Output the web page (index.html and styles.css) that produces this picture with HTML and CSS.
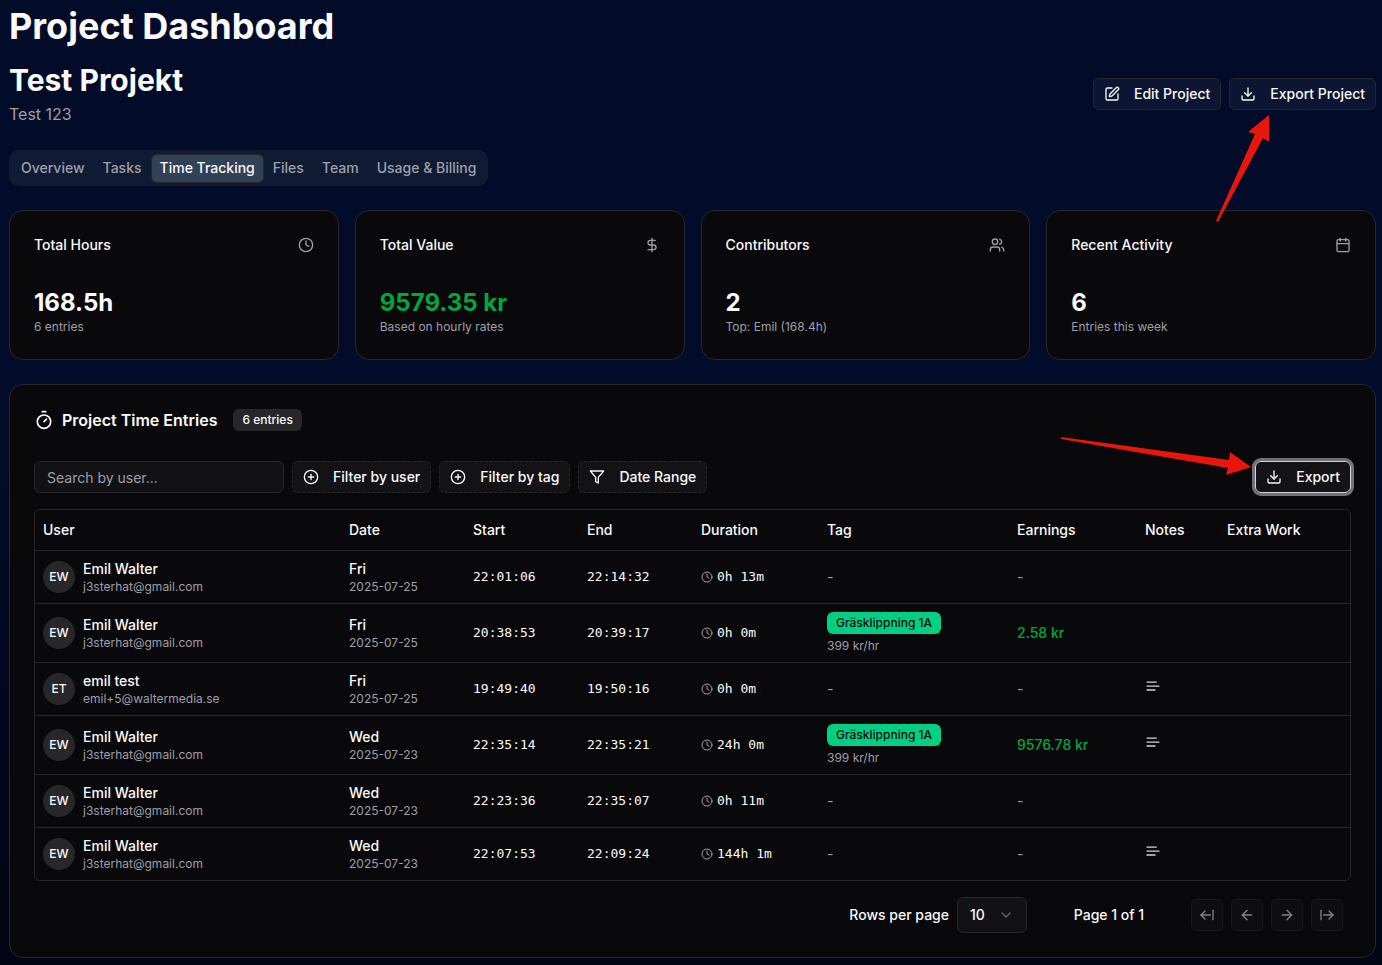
FILE: index.html
```
<!DOCTYPE html>
<html lang="en">
<head>
<meta charset="UTF-8">
<meta name="viewport" content="width=device-width, initial-scale=1">
<title>Project Dashboard</title>
<link rel="stylesheet" href="styles.css">
</head>
<body>
  <!-- shared icons -->
  <svg class="sprite" aria-hidden="true">
    <symbol id="i-edit" viewBox="0 0 24 24"><path d="M12 3H5a2 2 0 0 0-2 2v14a2 2 0 0 0 2 2h14a2 2 0 0 0 2-2v-7"/><path d="M18.375 2.625a1 1 0 0 1 3 3l-9.013 9.014a2 2 0 0 1-.853.505l-2.873.84a.5.5 0 0 1-.62-.62l.84-2.873a2 2 0 0 1 .506-.852z"/></symbol>
    <symbol id="i-download" viewBox="0 0 24 24"><path d="M21 15v4a2 2 0 0 1-2 2H5a2 2 0 0 1-2-2v-4"/><path d="M7 10l5 5 5-5"/><path d="M12 15V3"/></symbol>
    <symbol id="i-clock" viewBox="0 0 24 24"><circle cx="12" cy="12" r="10"/><path d="M12 6v6l4 2"/></symbol>
    <symbol id="i-dollar" viewBox="0 0 24 24"><path d="M12 2v20"/><path d="M17 5H9.500a3.500 3.500 0 0 0 0 7h5a3.500 3.500 0 0 1 0 7H6"/></symbol>
    <symbol id="i-users" viewBox="0 0 24 24"><path d="M16 21v-2a4 4 0 0 0-4-4H6a4 4 0 0 0-4 4v2"/><circle cx="9" cy="7" r="4"/><path d="M22 21v-2a4 4 0 0 0-3-3.870"/><path d="M16 3.130a4 4 0 0 1 0 7.750"/></symbol>
    <symbol id="i-calendar" viewBox="0 0 24 24"><path d="M8 2v4"/><path d="M16 2v4"/><rect width="18" height="18" x="3" y="4" rx="2"/><path d="M3 10h18"/></symbol>
    <symbol id="i-timer" viewBox="0 0 24 24"><path d="M10 2h4"/><path d="M12 14l3-3"/><circle cx="12" cy="14" r="8"/></symbol>
    <symbol id="i-plus" viewBox="0 0 24 24"><circle cx="12" cy="12" r="10"/><path d="M8 12h8"/><path d="M12 8v8"/></symbol>
    <symbol id="i-filter" viewBox="0 0 24 24"><path d="M22 3H2l8 9.460V19l4 2v-8.540z"/></symbol>
    <symbol id="i-text" viewBox="0 0 24 24"><path d="M17 6.100H3"/><path d="M21 12.100H3"/><path d="M15.100 18H3"/></symbol>
    <symbol id="i-left" viewBox="0 0 24 24"><path d="M12 19l-7-7 7-7"/><path d="M19 12H5"/></symbol>
    <symbol id="i-right" viewBox="0 0 24 24"><path d="M5 12h14"/><path d="M12 5l7 7-7 7"/></symbol>
    <symbol id="i-first" viewBox="0 0 24 24"><path d="M9 6l-6 6 6 6"/><path d="M3 12h14"/><path d="M21 19V5"/></symbol>
    <symbol id="i-last" viewBox="0 0 24 24"><path d="M3 5v14"/><path d="M21 12H7"/><path d="M15 18l6-6-6-6"/></symbol>
  </svg>

  <main class="page">
    <h1>Project Dashboard</h1>

    <header class="project">
      <div>
        <h2>Test Projekt</h2>
        <p class="description">Test 123</p>
      </div>
      <div class="actions">
        <button class="button" type="button"><svg class="icon"><use href="#i-edit"/></svg>Edit Project</button>
        <button class="button" type="button"><svg class="icon"><use href="#i-download"/></svg>Export Project</button>
      </div>
    </header>

    <div class="tabs" role="tablist">
      <button class="tab" type="button" role="tab">Overview</button>
      <button class="tab" type="button" role="tab">Tasks</button>
      <button class="tab active" type="button" role="tab" aria-selected="true">Time Tracking</button>
      <button class="tab" type="button" role="tab">Files</button>
      <button class="tab" type="button" role="tab">Team</button>
      <button class="tab" type="button" role="tab">Usage &amp; Billing</button>
    </div>

    <section class="stats">
      <div class="card">
        <div class="card-top"><h3>Total Hours</h3><svg class="icon"><use href="#i-clock"/></svg></div>
        <div class="value">168.5h</div>
        <p class="small">6 entries</p>
      </div>
      <div class="card">
        <div class="card-top"><h3>Total Value</h3><svg class="icon"><use href="#i-dollar"/></svg></div>
        <div class="value green">9579.35 kr</div>
        <p class="small">Based on hourly rates</p>
      </div>
      <div class="card">
        <div class="card-top"><h3>Contributors</h3><svg class="icon"><use href="#i-users"/></svg></div>
        <div class="value">2</div>
        <p class="small">Top: Emil (168.4h)</p>
      </div>
      <div class="card">
        <div class="card-top"><h3>Recent Activity</h3><svg class="icon"><use href="#i-calendar"/></svg></div>
        <div class="value">6</div>
        <p class="small">Entries this week</p>
      </div>
    </section>

    <section class="card entries">
      <div class="entries-title">
        <svg class="icon large"><use href="#i-timer"/></svg>
        <h3>Project Time Entries</h3>
        <span class="badge">6 entries</span>
      </div>

      <div class="toolbar">
        <input class="search" type="text" placeholder="Search by user..." aria-label="Search by user">
        <button class="button dashed" type="button"><svg class="icon"><use href="#i-plus"/></svg>Filter by user</button>
        <button class="button dashed" type="button"><svg class="icon"><use href="#i-plus"/></svg>Filter by tag</button>
        <button class="button dashed" type="button"><svg class="icon"><use href="#i-filter"/></svg>Date Range</button>
        <button class="button focused" type="button"><svg class="icon"><use href="#i-download"/></svg>Export</button>
      </div>

      <div class="table-wrap">
        <table>
          <colgroup>
            <col class="c-user"><col class="c-date"><col class="c-time"><col class="c-time"><col class="c-duration"><col class="c-tag"><col class="c-earnings"><col class="c-notes"><col class="c-extra">
          </colgroup>
          <thead>
            <tr><th>User</th><th>Date</th><th>Start</th><th>End</th><th>Duration</th><th>Tag</th><th>Earnings</th><th>Notes</th><th>Extra Work</th></tr>
          </thead>
          <tbody>
            <tr>
              <td><div class="user"><span class="avatar">EW</span><div><div class="name">Emil Walter</div><div class="small">j3sterhat@gmail.com</div></div></div></td>
              <td><div class="name">Fri</div><div class="small">2025-07-25</div></td>
              <td class="mono">22:01:06</td>
              <td class="mono">22:14:32</td>
              <td class="mono"><div class="duration"><svg class="icon tiny"><use href="#i-clock"/></svg>0h 13m</div></td>
              <td class="muted">-</td>
              <td class="muted">-</td>
              <td></td>
              <td></td>
            </tr>
            <tr>
              <td><div class="user"><span class="avatar">EW</span><div><div class="name">Emil Walter</div><div class="small">j3sterhat@gmail.com</div></div></div></td>
              <td><div class="name">Fri</div><div class="small">2025-07-25</div></td>
              <td class="mono">20:38:53</td>
              <td class="mono">20:39:17</td>
              <td class="mono"><div class="duration"><svg class="icon tiny"><use href="#i-clock"/></svg>0h 0m</div></td>
              <td><div class="tag-cell"><span class="badge tag">Gräsklippning 1A</span><span class="small">399 kr/hr</span></div></td>
              <td class="name green">2.58 kr</td>
              <td></td>
              <td></td>
            </tr>
            <tr>
              <td><div class="user"><span class="avatar">ET</span><div><div class="name">emil test</div><div class="small">emil+5@waltermedia.se</div></div></div></td>
              <td><div class="name">Fri</div><div class="small">2025-07-25</div></td>
              <td class="mono">19:49:40</td>
              <td class="mono">19:50:16</td>
              <td class="mono"><div class="duration"><svg class="icon tiny"><use href="#i-clock"/></svg>0h 0m</div></td>
              <td class="muted">-</td>
              <td class="muted">-</td>
              <td><button class="note" type="button" aria-label="Show note"><svg class="icon"><use href="#i-text"/></svg></button></td>
              <td></td>
            </tr>
            <tr>
              <td><div class="user"><span class="avatar">EW</span><div><div class="name">Emil Walter</div><div class="small">j3sterhat@gmail.com</div></div></div></td>
              <td><div class="name">Wed</div><div class="small">2025-07-23</div></td>
              <td class="mono">22:35:14</td>
              <td class="mono">22:35:21</td>
              <td class="mono"><div class="duration"><svg class="icon tiny"><use href="#i-clock"/></svg>24h 0m</div></td>
              <td><div class="tag-cell"><span class="badge tag">Gräsklippning 1A</span><span class="small">399 kr/hr</span></div></td>
              <td class="name green">9576.78 kr</td>
              <td><button class="note" type="button" aria-label="Show note"><svg class="icon"><use href="#i-text"/></svg></button></td>
              <td></td>
            </tr>
            <tr>
              <td><div class="user"><span class="avatar">EW</span><div><div class="name">Emil Walter</div><div class="small">j3sterhat@gmail.com</div></div></div></td>
              <td><div class="name">Wed</div><div class="small">2025-07-23</div></td>
              <td class="mono">22:23:36</td>
              <td class="mono">22:35:07</td>
              <td class="mono"><div class="duration"><svg class="icon tiny"><use href="#i-clock"/></svg>0h 11m</div></td>
              <td class="muted">-</td>
              <td class="muted">-</td>
              <td></td>
              <td></td>
            </tr>
            <tr>
              <td><div class="user"><span class="avatar">EW</span><div><div class="name">Emil Walter</div><div class="small">j3sterhat@gmail.com</div></div></div></td>
              <td><div class="name">Wed</div><div class="small">2025-07-23</div></td>
              <td class="mono">22:07:53</td>
              <td class="mono">22:09:24</td>
              <td class="mono"><div class="duration"><svg class="icon tiny"><use href="#i-clock"/></svg>144h 1m</div></td>
              <td class="muted">-</td>
              <td class="muted">-</td>
              <td><button class="note" type="button" aria-label="Show note"><svg class="icon"><use href="#i-text"/></svg></button></td>
              <td></td>
            </tr>
          </tbody>
        </table>
      </div>

      <div class="pagination">
        <div class="rows">
          <label for="rowsPerPage">Rows per page</label>
          <select id="rowsPerPage">
            <option>10</option>
            <option>20</option>
            <option>50</option>
          </select>
        </div>
        <div class="page-count">Page 1 of 1</div>
        <div class="pager">
          <button class="button square" type="button" disabled aria-label="First page"><svg class="icon"><use href="#i-first"/></svg></button>
          <button class="button square" type="button" disabled aria-label="Previous page"><svg class="icon"><use href="#i-left"/></svg></button>
          <button class="button square" type="button" disabled aria-label="Next page"><svg class="icon"><use href="#i-right"/></svg></button>
          <button class="button square" type="button" disabled aria-label="Last page"><svg class="icon"><use href="#i-last"/></svg></button>
        </div>
      </div>
    </section>

    <!-- red pointers to the two export buttons -->
    <svg class="pointer pointer-project" viewBox="0 0 56 108" aria-hidden="true"><path d="M54 0V27L48 23L3 107L1 106L40 19L33 17Z"/></svg>
    <svg class="pointer pointer-entries" viewBox="0 0 192 40" aria-hidden="true"><path d="M1 1L169 24L170 16L191 31L166 39L168 32L1 3Z"/></svg>
  </main>
</body>
</html>
```

FILE: styles.css
```
* {
  box-sizing: border-box;
}
body {
  margin: 0;
  min-height: 100vh;
  background: linear-gradient(#020b28, #020c2a 40%, #010514);
  color: #fafafa;
  font-family: Inter, sans-serif;
  font-size: 14px;
  line-height: 20px;
}
h1, h2, h3, p {
  margin: 0;
}
button, input, select {
  font: inherit;
  color: inherit;
}

.sprite {
  display: none;
}
.icon {
  width: 16px;
  height: 16px;
  flex: none;
  display: block;
  fill: none;
  stroke: currentColor;
  stroke-width: 2;
  stroke-linecap: round;
  stroke-linejoin: round;
}
.icon.large {
  width: 20px;
  height: 20px;
}
.icon.tiny {
  width: 12px;
  height: 12px;
  color: #9f9fa9;
}

.page {
  position: relative;
  padding: 6px 6px 7px 9px;
}
h1 {
  font-size: 36px;
  line-height: 40px;
  font-weight: 700;
}
h2 {
  font-size: 30px;
  line-height: 36px;
  font-weight: 700;
}

.project {
  display: flex;
  justify-content: space-between;
  align-items: center;
  margin-top: 16px;
}
.description {
  margin-top: 4px;
  font-size: 16px;
  line-height: 24px;
  color: #9f9fa9;
}
.actions {
  display: flex;
  gap: 8px;
}

.button {
  display: flex;
  align-items: center;
  gap: 14px;
  height: 32px;
  padding: 0 10px;
  border: 1px solid #27272a;
  border-radius: 6px;
  background: rgba(255, 255, 255, 0.045);
  font-weight: 500;
  white-space: nowrap;
}
.button.dashed {
  border-style: dashed;
}
.button.focused {
  margin-left: auto;
  border-color: #d4d4d8;
  box-shadow: 0 0 0 3px #71717a;
}
.button.square {
  width: 32px;
  padding: 0;
  justify-content: center;
}
.button:disabled {
  opacity: 0.5;
}

.tabs {
  display: flex;
  align-items: center;
  width: fit-content;
  height: 36px;
  margin-top: 24px;
  padding: 3px;
  border-radius: 10px;
  background: #0f1a33;
}
.tab {
  height: 29px;
  padding: 0 8px;
  border: 1px solid transparent;
  border-radius: 6px;
  background: none;
  color: #9f9fa9;
  font-weight: 500;
}
.tab.active {
  border-color: #27272a;
  background: #314158;
  color: #fafafa;
}

.stats {
  display: grid;
  grid-template-columns: repeat(4, 1fr);
  gap: 16px;
  margin-top: 24px;
}
.card {
  padding: 24px;
  border: 1px solid #27272a;
  border-radius: 14px;
  background: #09090b;
}
.card-top {
  display: flex;
  justify-content: space-between;
  align-items: center;
  margin-bottom: 32px;
}
.card-top h3 {
  font-size: 14px;
  font-weight: 500;
}
.card-top .icon {
  color: #9f9fa9;
}
.value {
  font-size: 24px;
  line-height: 32px;
  font-weight: 700;
}
.small {
  font-size: 12px;
  line-height: 16px;
  color: #9f9fa9;
}
.green {
  color: #00a63e;
}

.entries {
  margin-top: 24px;
}
.entries-title {
  display: flex;
  align-items: center;
  gap: 8px;
  height: 22px;
}
.entries-title h3 {
  font-size: 16px;
  font-weight: 600;
}
.entries-title .badge {
  margin-left: 8px;
}
.badge {
  padding: 3px 9px;
  border-radius: 6px;
  background: #27272a;
  font-size: 12px;
  line-height: 16px;
  font-weight: 500;
}

.toolbar {
  display: flex;
  gap: 8px;
  margin: 30px 0 16px;
}
.search {
  width: 250px;
  height: 32px;
  padding: 0 12px;
  border: 1px solid #27272a;
  border-radius: 6px;
  background: #121214;
}
.search::placeholder {
  color: #9f9fa9;
}

.table-wrap {
  border: 1px solid #27272a;
  border-radius: 6px;
}
table {
  width: 100%;
  table-layout: fixed;
  border-collapse: separate;
  border-spacing: 0;
}
.c-user { width: 306px; }
.c-date { width: 124px; }
.c-time { width: 114px; }
.c-duration { width: 126px; }
.c-tag { width: 190px; }
.c-earnings { width: 128px; }
.c-notes { width: 82px; }
.c-extra { width: 131px; }
th, td {
  padding: 8px;
  border-bottom: 1px solid #27272a;
  text-align: left;
  vertical-align: middle;
  white-space: nowrap;
}
th {
  padding: 10px 8px;
  font-weight: 500;
}
tbody tr:last-child td {
  border-bottom: none;
}
.user {
  display: flex;
  align-items: center;
  gap: 8px;
}
.avatar {
  display: flex;
  align-items: center;
  justify-content: center;
  width: 32px;
  height: 32px;
  border-radius: 50%;
  background: #27272a;
  font-size: 12px;
  font-weight: 500;
}
.name {
  font-weight: 500;
}
.mono {
  font-family: "DejaVu Sans Mono", monospace;
  font-size: 13px;
}
.duration {
  display: flex;
  align-items: center;
  gap: 4px;
}
.muted {
  color: #9f9fa9;
}
.tag-cell {
  display: flex;
  flex-direction: column;
  align-items: flex-start;
  gap: 4px;
}
.tag {
  background: #00d084;
  color: #09090b;
}
.note {
  display: flex;
  align-items: flex-start;
  height: 22px;
  padding: 0;
  border: none;
  background: none;
  color: #d4d4d8;
}

.pagination {
  display: flex;
  justify-content: flex-end;
  align-items: center;
  gap: 32px;
  margin-top: 16px;
  padding-right: 8px;
  font-weight: 500;
}
.rows {
  display: flex;
  align-items: center;
  gap: 8px;
}
.rows select {
  width: 70px;
  height: 36px;
  padding: 0 12px;
  border: 1px solid #27272a;
  border-radius: 6px;
  appearance: none;
  background: #121214 url("data:image/svg+xml,%3Csvg xmlns='http://www.w3.org/2000/svg' viewBox='0 0 24 24' fill='none' stroke='%2366666b' stroke-width='2' stroke-linecap='round' stroke-linejoin='round'%3E%3Cpath d='M6 9l6 6 6-6'/%3E%3C/svg%3E") no-repeat right 12px center / 16px;
}
.page-count {
  width: 100px;
  text-align: center;
}
.pager {
  display: flex;
  gap: 8px;
}

.pointer {
  position: absolute;
  fill: #e8160c;
  pointer-events: none;
}
.pointer-project {
  top: 115px;
  right: 111px;
  width: 56px;
  height: 108px;
}
.pointer-entries {
  top: 436px;
  right: 130px;
  width: 192px;
  height: 40px;
}
```
